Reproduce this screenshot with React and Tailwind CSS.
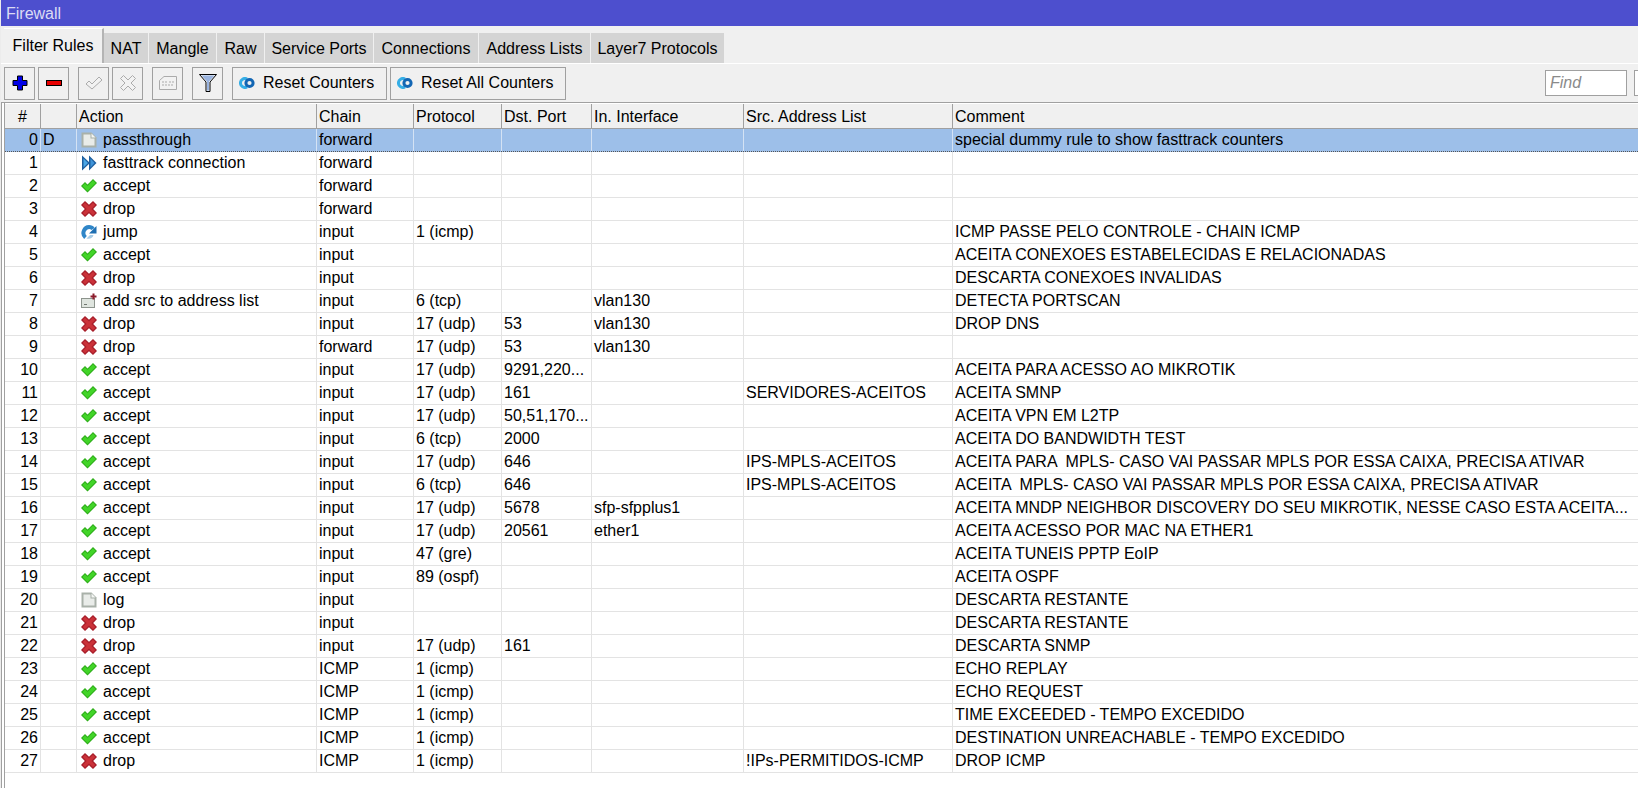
import React from 'react';

const cols = 'grid grid-cols-[36px_36px_240px_97px_88px_90px_152px_209px_1fr]';

const rows = [
  ['0', 'D', 'passthrough', 'forward', '', '', '', '', 'special dummy rule to show fasttrack counters'],
  ['1', '', 'fasttrack connection', 'forward', '', '', '', '', ''],
  ['2', '', 'accept', 'forward', '', '', '', '', ''],
  ['3', '', 'drop', 'forward', '', '', '', '', ''],
  ['4', '', 'jump', 'input', '1 (icmp)', '', '', '', 'ICMP PASSE PELO CONTROLE - CHAIN ICMP'],
  ['5', '', 'accept', 'input', '', '', '', '', 'ACEITA CONEXOES ESTABELECIDAS E RELACIONADAS'],
  ['6', '', 'drop', 'input', '', '', '', '', 'DESCARTA CONEXOES INVALIDAS'],
  ['7', '', 'add src to address list', 'input', '6 (tcp)', '', 'vlan130', '', 'DETECTA PORTSCAN'],
  ['8', '', 'drop', 'input', '17 (udp)', '53', 'vlan130', '', 'DROP DNS'],
  ['9', '', 'drop', 'forward', '17 (udp)', '53', 'vlan130', '', ''],
  ['10', '', 'accept', 'input', '17 (udp)', '9291,220...', '', '', 'ACEITA PARA ACESSO AO MIKROTIK'],
  ['11', '', 'accept', 'input', '17 (udp)', '161', '', 'SERVIDORES-ACEITOS', 'ACEITA SMNP'],
  ['12', '', 'accept', 'input', '17 (udp)', '50,51,170...', '', '', 'ACEITA VPN EM L2TP'],
  ['13', '', 'accept', 'input', '6 (tcp)', '2000', '', '', 'ACEITA DO BANDWIDTH TEST'],
  ['14', '', 'accept', 'input', '17 (udp)', '646', '', 'IPS-MPLS-ACEITOS', 'ACEITA PARA  MPLS- CASO VAI PASSAR MPLS POR ESSA CAIXA, PRECISA ATIVAR'],
  ['15', '', 'accept', 'input', '6 (tcp)', '646', '', 'IPS-MPLS-ACEITOS', 'ACEITA  MPLS- CASO VAI PASSAR MPLS POR ESSA CAIXA, PRECISA ATIVAR'],
  ['16', '', 'accept', 'input', '17 (udp)', '5678', 'sfp-sfpplus1', '', 'ACEITA MNDP NEIGHBOR DISCOVERY DO SEU MIKROTIK, NESSE CASO ESTA ACEITA...'],
  ['17', '', 'accept', 'input', '17 (udp)', '20561', 'ether1', '', 'ACEITA ACESSO POR MAC NA ETHER1'],
  ['18', '', 'accept', 'input', '47 (gre)', '', '', '', 'ACEITA TUNEIS PPTP EoIP'],
  ['19', '', 'accept', 'input', '89 (ospf)', '', '', '', 'ACEITA OSPF'],
  ['20', '', 'log', 'input', '', '', '', '', 'DESCARTA RESTANTE'],
  ['21', '', 'drop', 'input', '', '', '', '', 'DESCARTA RESTANTE'],
  ['22', '', 'drop', 'input', '17 (udp)', '161', '', '', 'DESCARTA SNMP'],
  ['23', '', 'accept', 'ICMP', '1 (icmp)', '', '', '', 'ECHO REPLAY'],
  ['24', '', 'accept', 'ICMP', '1 (icmp)', '', '', '', 'ECHO REQUEST'],
  ['25', '', 'accept', 'ICMP', '1 (icmp)', '', '', '', 'TIME EXCEEDED - TEMPO EXCEDIDO'],
  ['26', '', 'accept', 'ICMP', '1 (icmp)', '', '', '', 'DESTINATION UNREACHABLE - TEMPO EXCEDIDO'],
  ['27', '', 'drop', 'ICMP', '1 (icmp)', '', '', '!IPs-PERMITIDOS-ICMP', 'DROP ICMP'],
];

const tabs = [
  ['NAT', 'w-[45px]'],
  ['Mangle', 'w-[68px]'],
  ['Raw', 'w-[48px]'],
  ['Service Ports', 'w-[109px]'],
  ['Connections', 'w-[105px]'],
  ['Address Lists', 'w-[112px]'],
  ['Layer7 Protocols', 'w-[134px]'],
];

const DocIcon = () => (
  <svg width="16" height="16" viewBox="0 0 16 16">
    <path d="M0.5 0.5H10.5L15.5 5.5V15.5H0.5Z" fill="#a9b1a9" />
    <path d="M2.5 2.5H9.5V6.5H13.5V13.5H2.5Z" fill="#e9ece9" />
    <path d="M10.5 1.5L14.5 5.5H10.5Z" fill="#f4f6f4" />
  </svg>
);

const FastIcon = () => (
  <svg width="16" height="16" viewBox="0 0 16 16">
    <path d="M1 0.5L9 8L1 15.5Z" fill="#1d5f9f" />
    <path d="M2.5 3.5L7 8L2.5 12.5Z" fill="#4aa6e6" />
    <path d="M8 0.5L15.5 8L8 15.5Z" fill="#1d5f9f" />
    <path d="M9.5 3.5L13.5 8L9.5 12.5Z" fill="#3f94d8" />
  </svg>
);

const AcceptIcon = () => (
  <svg width="16" height="16" viewBox="0 0 16 16">
    <path d="M0 8L4 4L6.5 6.5L12 1L16 5L6.5 14.5Z" fill="#2fae1b" />
    <path d="M1.5 8L4 5.5L6.5 8L12 2.5L14.5 5L6.5 13Z" fill="#42d528" />
  </svg>
);

const DropIcon = () => (
  <svg width="16" height="16" viewBox="0 0 16 16">
    <path d="M4 0L8 3.8L12 0L16 4L12.2 8L16 12L12 16L8 12.2L4 16L0 12L3.8 8L0 4Z" fill="#a81f2b" />
    <path d="M4 1.8L8 5.6L12 1.8L14.2 4L10.4 8L14.2 12L12 14.2L8 10.4L4 14.2L1.8 12L5.6 8L1.8 4Z" fill="#cb3239" />
  </svg>
);

const JumpIcon = () => (
  <svg width="16" height="16" viewBox="0 0 16 16">
    <path d="M4.5 13.5C0 9.5 3.5 3 8 3C9.5 3 11 3.5 12 5" fill="none" stroke="#2f86c8" strokeWidth="4" />
    <path d="M15.5 2V9.5H8Z" fill="#1f6fb2" />
    <path d="M5.5 14.5C8.5 15.5 12 14 12.5 11L9 11Z" fill="#a8cce6" />
  </svg>
);

const AddListIcon = () => (
  <svg width="16" height="16" viewBox="0 0 16 16">
    <rect x="0.5" y="5.5" width="13" height="9" fill="#dfe5df" stroke="#8d948d" />
    <rect x="3" y="11" width="3" height="1" fill="#6f766f" />
    <path d="M11.5 0.5H13.5V2.5H15.5V4.5H13.5V6.5H11.5V4.5H9.5V2.5H11.5Z" fill="#8c1c2c" />
  </svg>
);

const actionIcons = {
  passthrough: DocIcon,
  log: DocIcon,
  'fasttrack connection': FastIcon,
  accept: AcceptIcon,
  drop: DropIcon,
  jump: JumpIcon,
  'add src to address list': AddListIcon,
};

const ResetIcon = () => (
  <svg width="16" height="12" viewBox="0 0 16 12">
    <path d="M8 2A4.5 4.5 0 1 0 8 10" fill="none" stroke="#35aee6" strokeWidth="3" />
    <circle cx="10.5" cy="6" r="3.6" fill="none" stroke="#1266b4" strokeWidth="3" />
  </svg>
);

const ToolButton = ({ className, children }) => (
  <button className={`w-[31px] h-[33px] border border-[#a0a0a0] bg-[#f0f0f0] flex items-center justify-center ${className}`}>
    {children}
  </button>
);

const ResetButton = ({ className, label }) => (
  <button className={`h-[33px] border border-[#a0a0a0] bg-[#f0f0f0] flex items-center gap-[8px] pl-[6px] ${className}`}>
    <ResetIcon />
    <span>{label}</span>
  </button>
);

const App = () => {
  return (
    <div className="w-[1638px] h-[788px] overflow-hidden flex flex-col bg-white border-l border-[#ececec] text-[16px] text-black font-['Liberation_Sans',sans-serif]">
      <div className="h-[26px] shrink-0 bg-[#4d4fce] pl-[5px] text-[#dcdcf4] leading-[27px]">Firewall</div>

      <div className="flex h-[38px] shrink-0 bg-[#f0f0f0] pl-[3px] items-end border-b border-white">
        <div className="w-[100px] h-[35px] bg-[#f0f0f0] border-t border-t-white border-r-2 border-r-[#b4b4b4] flex items-center justify-center">Filter Rules</div>
        {tabs.map(([name, w]) => (
          <div key={name} className={`${w} h-[31px] pt-px bg-[#d4d4d4] border-r border-r-[#f0f0f0] border-t border-t-[#f0f0f0] flex items-center justify-center`}>{name}</div>
        ))}
      </div>

      <div className="flex items-center h-[39px] shrink-0 bg-[#f0f0f0] pl-[3px] border-b border-[#a0a0a0]">
        <ToolButton className="">
          <svg width="16" height="16" viewBox="0 0 16 16">
            <path d="M5.5 1H10.5V5.5H15V10.5H10.5V15H5.5V10.5H1V5.5H5.5Z" fill="#0000e8" stroke="#000" />
          </svg>
        </ToolButton>
        <ToolButton className="ml-[3px]">
          <svg width="16" height="6" viewBox="0 0 16 6">
            <rect x="0.5" y="0.5" width="15" height="5" fill="#e80000" stroke="#000" />
          </svg>
        </ToolButton>
        <ToolButton className="ml-[9px]">
          <svg width="18" height="16" viewBox="0 0 18 16">
            <path d="M1 9L4 6L7 9L14 2L17 5L7 14Z" fill="#f2f2f2" stroke="#ababab" />
          </svg>
        </ToolButton>
        <ToolButton className="ml-[3px]">
          <svg width="16" height="16" viewBox="0 0 16 16">
            <path d="M3.5 0.5L8 5L12.5 0.5L15.5 3.5L11 8L15.5 12.5L12.5 15.5L8 11L3.5 15.5L0.5 12.5L5 8L0.5 3.5Z" fill="#f2f2f2" stroke="#ababab" />
          </svg>
        </ToolButton>
        <ToolButton className="ml-[9px]">
          <svg width="18" height="14" viewBox="0 0 18 14">
            <path d="M0.5 13.5V4.5L5 0.5H17.5V13.5Z" fill="#f2f2f2" stroke="#ababab" />
            <path d="M3 6H8M10 6H15M3 9H15" stroke="#ababab" strokeDasharray="2 1" />
          </svg>
        </ToolButton>
        <ToolButton className="ml-[9px]">
          <svg width="18" height="18" viewBox="0 0 18 18">
            <path d="M0.5 0.5H17.5L11 8V17.5H7V8Z" fill="#f4f6f8" stroke="#000" />
            <path d="M2.5 1.5H15.5L10 7.5V16.5H8V7.5Z" fill="#9ab4e0" />
          </svg>
        </ToolButton>
        <ResetButton className="w-[155px] ml-[9px]" label="Reset Counters" />
        <ResetButton className="w-[176px] ml-[3px]" label="Reset All Counters" />
        <div className="ml-auto flex items-center">
          <div className="w-[82px] h-[26px] border border-[#a0a0a0] bg-white pl-1 italic text-[#8a8a8a] leading-[24px]">Find</div>
          <div className="w-[4px] h-[26px] ml-[7px] border border-r-0 border-[#a0a0a0] bg-white" />
        </div>
      </div>

      <div className="flex-1 border-l border-[#a0a0a0] pl-[2px]">
        <div className="h-full border-l border-[#a0a0a0]">
          <div className={`${cols} h-[26px] bg-[#f0f0f0] border-t border-t-white border-b border-b-[#a0a0a0] leading-[25px]`}>
            {['#', '', 'Action', 'Chain', 'Protocol', 'Dst. Port', 'In. Interface', 'Src. Address List', 'Comment'].map((h, i) => (
              <div key={i} className={`border-r border-[#a0a0a0] last:border-r-0 px-[2px] ${i === 0 ? 'text-center' : ''}`}>{h}</div>
            ))}
          </div>
          {rows.map((row, r) => {
            const Icon = actionIcons[row[2]];
            return (
              <div key={row[0]} className={`${cols} h-[23px] leading-[22px] border-b ${r === 0 ? 'bg-[#9dbfe9] border-dotted border-b-[#555555]' : 'bg-white border-[#e3e3e3]'}`}>
                {row.map((cell, i) => (
                  <div key={i} className={`border-r last:border-r-0 whitespace-pre overflow-hidden px-[2px] ${r === 0 ? 'border-r-[#d4e2f4]' : 'border-r-[#e3e3e3]'} ${i === 0 ? 'text-right' : ''} ${i === 2 ? 'flex items-center gap-[6px] pl-[4px]' : ''}`}>
                    {i === 2 && <Icon />}
                    {cell}
                  </div>
                ))}
              </div>
            );
          })}
        </div>
      </div>
    </div>
  );
};

export default App;
